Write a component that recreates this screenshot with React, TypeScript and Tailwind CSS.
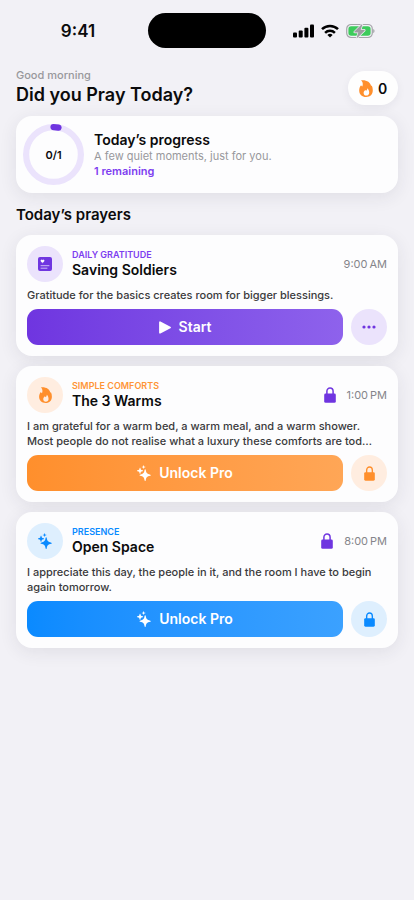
import type { ReactNode } from 'react';

type IconProps = { className?: string };

function Flame({ className }: IconProps) {
  return (
    <svg viewBox="0 0 16 20" className={className} fill="currentColor" aria-hidden="true">
      <path
        fillRule="evenodd"
        d="M2.200.400C8.500-.3 13.300 2.600 14 7.200c.4-.2.6-.6.7-1.100C15.600 7.900 16 9.900 16 12.100 16 16.900 12.900 20 8.200 20 3.300 20 0 16.800 0 12.300 0 9.800.8 7.900 2.200 6.200c.3.700.8 1.200 1.400 1.500C4.700 5 4.300 2.500 2.200.4ZM9.600 9.600c0 1.500-.6 2.200-1.400 3.100-.4-.2-.7-.5-.8-1-1.300.9-2.200 2.100-2.200 3.500 0 1.900 1.300 3.100 3.200 3.100s3.400-1.300 3.400-3.400c0-2.200-.8-4-2.200-5.300Z"
      />
    </svg>
  );
}

function Sparkles({ className }: IconProps) {
  return (
    <svg viewBox="0 0 18 20" className={className} fill="currentColor" aria-hidden="true">
      <path d="M10.500 5.200c.4 0 .6.3.7.7.6 4 1.500 5.400 5.900 6.200.4.100.700.300.700.700s-.3.600-.7.700c-4.400.7-5.300 2.200-5.900 6.100-.100.400-.300.700-.7.700s-.6-.3-.7-.7c-.6-3.900-1.500-5.400-5.900-6.100-.4-.1-.7-.3-.7-.7s.3-.6.7-.7c4.400-.8 5.300-2.200 5.900-6.200.1-.4.300-.7.700-.7Z" />
      <path d="M3.900 3.200c.3 0 .4.200.5.500.3 2.100.8 2.600 2.900 2.900.3.100.5.200.5.500s-.2.400-.5.500c-2.100.3-2.600.8-2.900 2.900-.1.300-.2.500-.5.500s-.4-.2-.5-.5C3.100 8.400 2.600 7.900.5 7.600.2 7.500 0 7.400 0 7.100s.2-.4.5-.5c2.100-.3 2.600-.8 2.900-2.900.1-.3.200-.5.500-.5Z" />
      <path d="M8.500 0c.2 0 .3.100.3.300.2 1.200.5 1.500 1.700 1.700.2 0 .3.100.3.300s-.1.300-.3.300c-1.200.2-1.500.5-1.700 1.700 0 .2-.1.300-.3.300s-.3-.1-.3-.3C8 3.100 7.700 2.800 6.500 2.600c-.2 0-.3-.1-.3-.3s.1-.3.300-.3C7.700 1.800 8 1.500 8.200.3c0-.2.1-.3.300-.3Z" />
    </svg>
  );
}

function Lock({ className }: IconProps) {
  return (
    <svg viewBox="0 0 12 16" className={className} aria-hidden="true">
      <path d="M2.900 7.500V4.300a3.100 3.400 0 0 1 6.200 0v3.200" fill="none" stroke="currentColor" strokeWidth="1.500" />
      <rect x="0.200" y="6.600" width="11.600" height="9.200" rx="1.400" fill="currentColor" />
    </svg>
  );
}

function NoteIcon() {
  return (
    <svg viewBox="0 0 14 14" className="h-3.5 w-3.5" aria-hidden="true">
      <rect width="14" height="14" rx="2" fill="#6f35e0" />
      <path d="M4.500 5.800 3 4.400a.95.95 0 0 1 1.500-1.200A.95.95 0 0 1 6 4.400Z" fill="#fff" stroke="#fff" strokeWidth="0.400" />
      <path d="M3 8.700h8M3 11.200h6" stroke="#d9caf8" strokeWidth="0.900" strokeLinecap="round" />
    </svg>
  );
}

function PlayIcon() {
  return (
    <svg viewBox="0 0 12 13" className="h-[13px] w-3" aria-hidden="true">
      <path d="M1 1.300v10.400l10-5.200Z" fill="#fff" stroke="#fff" strokeWidth="1.800" strokeLinejoin="round" />
    </svg>
  );
}

function MoreIcon() {
  return (
    <svg viewBox="0 0 14 4" className="h-1 w-3.5" fill="currentColor" aria-hidden="true">
      <circle cx="2" cy="2" r="1.600" />
      <circle cx="7" cy="2" r="1.600" />
      <circle cx="12" cy="2" r="1.600" />
    </svg>
  );
}

function StatusBar() {
  return (
    <div className="grid grid-cols-[1fr_118px_1fr] items-center pt-[13px]">
      <span className="justify-self-center pl-2 text-[17px] leading-5 font-semibold">9:41</span>
      <div className="h-[35px] rounded-full bg-black" />
      <div className="flex items-center gap-[7px] justify-self-center pr-3">
        <svg viewBox="0 0 21 14" className="h-3.5 w-[21px]" aria-label="Signal">
          <rect x="0" y="8.500" width="4" height="5" rx="1" />
          <rect x="5.700" y="6.500" width="4" height="7" rx="1" />
          <rect x="11.400" y="3.700" width="4" height="9.800" rx="1" />
          <rect x="17" y="0.500" width="4" height="13" rx="1" />
        </svg>
        <svg viewBox="0 0 18 14" className="h-3.5 w-[18px]" fill="none" stroke="#000" strokeWidth="2.500" aria-label="Wi-Fi">
          <path d="M1 5.200a11.500 11.500 0 0 1 16 0" />
          <path d="M4.100 8.800a7 7 0 0 1 9.800 0" />
          <path d="M9 13.500 6.400 11a3.800 3.800 0 0 1 5.200 0Z" fill="#000" stroke="none" />
        </svg>
        <svg viewBox="0 0 29 16" className="h-4 w-[29px]" aria-label="Battery charging">
          <rect x="0.700" y="1.500" width="25.600" height="13" rx="4.400" fill="none" stroke="#a5a5a9" strokeWidth="1.200" />
          <rect x="2.400" y="3.200" width="22.200" height="9.600" rx="2.800" fill="#3ccb5b" />
          <path d="M27.400 6v4.200c1.400-.6 1.400-3.600 0-4.200Z" fill="#8e8e93" />
          <path
            d="M15.800 1.300 8.400 8.600c-.4.500-.2 1 .4 1h3.500l-1.700 5.100c-.1.600.3.700.6.400l7.400-7.300c.4-.5.2-1-.4-1h-3.500l1.700-5.100c.1-.5-.3-.7-.6-.4Z"
            fill="#9d9da1"
            stroke="#f2f1f6"
            strokeWidth="1.400"
            paintOrder="stroke"
          />
        </svg>
      </div>
    </div>
  );
}

function ProgressRing() {
  return (
    <div className="grid h-[61px] w-[61px] shrink-0 place-items-center">
      <svg viewBox="0 0 61 61" className="col-start-1 row-start-1 h-full w-full" fill="none" aria-hidden="true">
        <circle cx="30.500" cy="30.500" r="27.400" stroke="#ebe3fc" strokeWidth="6.200" />
        <path d="M30.500 3.100a27.400 27.400 0 0 1 5 .5" stroke="#6f35e0" strokeWidth="6.200" strokeLinecap="round" />
      </svg>
      <span className="col-start-1 row-start-1 text-[11px] leading-4 font-semibold">0/1</span>
    </div>
  );
}

const tones = {
  purple: { soft: 'bg-[#ebe3fc]', text: 'text-[#6f35e0]', label: 'text-[#7d3df0]', button: 'from-[#6f35e0] to-[#8e62ec]' },
  orange: { soft: 'bg-[#ffede0]', text: 'text-[#ff8f2c]', label: 'text-[#ff9536]', button: 'from-[#ff8f2c] to-[#ffa656]' },
  blue: { soft: 'bg-[#deeffe]', text: 'text-[#0a8aff]', label: 'text-[#0a8aff]', button: 'from-[#0a8aff] to-[#3ba1ff]' },
};

type PrayerProps = {
  tone: keyof typeof tones;
  icon: ReactNode;
  category: string;
  title: string;
  time: string;
  text: string;
  locked?: boolean;
};

function PrayerCard({ tone, icon, category, title, time, text, locked }: PrayerProps) {
  const t = tones[tone];
  return (
    <article className="flex flex-col gap-1.5 rounded-2xl bg-[#fdfdfe] p-[11px] shadow-[0_4px_18px_rgba(40,40,70,0.09)]">
      <div className="flex items-center">
        <div className={`flex h-9 w-9 shrink-0 items-center justify-center rounded-full ${t.soft} ${t.text}`}>{icon}</div>
        <div className="ml-[9px] min-w-0 flex-1">
          <p className={`text-[9px] leading-[12px] font-semibold uppercase ${t.label}`}>{category}</p>
          <h3 className="text-[14px] leading-[18px] font-semibold">{title}</h3>
        </div>
        {locked && <Lock className="mr-[11px] h-4 w-3 text-[#6f35e0]" />}
        <time className="text-[11px] leading-4 text-[#85858a]">{time}</time>
      </div>
      <p className="line-clamp-2 text-[11px] leading-[15px] font-medium text-[#3a3a3c]">{text}</p>
      <div className="flex gap-2">
        <button
          type="button"
          className={`flex h-9 flex-1 items-center justify-center gap-2 rounded-[11px] bg-linear-to-r text-[14px] leading-5 font-semibold text-white ${t.button}`}
        >
          {locked ? <Sparkles className="h-4 w-3.5" /> : <PlayIcon />}
          {locked ? 'Unlock Pro' : 'Start'}
        </button>
        <button
          type="button"
          aria-label={locked ? 'Locked' : 'More options'}
          className={`flex h-9 w-9 items-center justify-center rounded-full ${t.soft} ${t.text}`}
        >
          {locked ? <Lock className="h-[15px] w-[11px]" /> : <MoreIcon />}
        </button>
      </div>
    </article>
  );
}

export default function App() {
  return (
    <main className="min-h-screen bg-[#f2f1f6] font-['Inter','Liberation_Sans',sans-serif] text-[#0b0b0c]">
      <StatusBar />
      <div className="px-4 pt-5">
        <header className="flex items-center justify-between">
          <div>
            <p className="text-[11px] leading-[14px] font-medium text-[#98989c]">Good morning</p>
            <h1 className="text-[18px] leading-[26px] font-semibold">Did you Pray Today?</h1>
          </div>
          <button
            type="button"
            aria-label="Streak: 0 days"
            className="flex h-[34px] w-[50px] items-center justify-center gap-[5px] rounded-full bg-[#fefefe] text-[14px] font-semibold shadow-[0_3px_10px_rgba(40,40,70,0.06)]"
          >
            <Flame className="h-[17px] w-[14px] text-[#ff8f2c]" />0
          </button>
        </header>

        <section className="mt-2 flex items-center gap-[10px] rounded-2xl bg-[#fdfdfe] px-[7px] py-2 shadow-[0_4px_18px_rgba(40,40,70,0.09)]">
          <ProgressRing />
          <div>
            <h2 className="text-[14px] leading-[18px] font-semibold">Today’s progress</h2>
            <p className="text-[11px] leading-[15px] text-[#98989c]">A few quiet moments, just for you.</p>
            <p className="text-[11px] leading-[15px] font-semibold text-[#7d3df0]">1 remaining</p>
          </div>
        </section>

        <h2 className="mt-3 text-[15px] leading-5 font-semibold">Today’s prayers</h2>

        <div className="mt-[10px] flex flex-col gap-[10px]">
          <PrayerCard
            tone="purple"
            icon={<NoteIcon />}
            category="Daily Gratitude"
            title="Saving Soldiers"
            time={'9:00\u202fAM'}
            text="Gratitude for the basics creates room for bigger blessings."
          />
          <PrayerCard
            tone="orange"
            icon={<Flame className="h-4 w-[13px]" />}
            category="Simple Comforts"
            title="The 3 Warms"
            time={'1:00\u202fPM'}
            text="I am grateful for a warm bed, a warm meal, and a warm shower. Most people do not realise what a luxury these comforts are tod…"
            locked
          />
          <PrayerCard
            tone="blue"
            icon={<Sparkles className="h-4 w-3.5" />}
            category="Presence"
            title="Open Space"
            time={'8:00\u202fPM'}
            text="I appreciate this day, the people in it, and the room I have to begin again tomorrow."
            locked
          />
        </div>
      </div>
    </main>
  );
}
